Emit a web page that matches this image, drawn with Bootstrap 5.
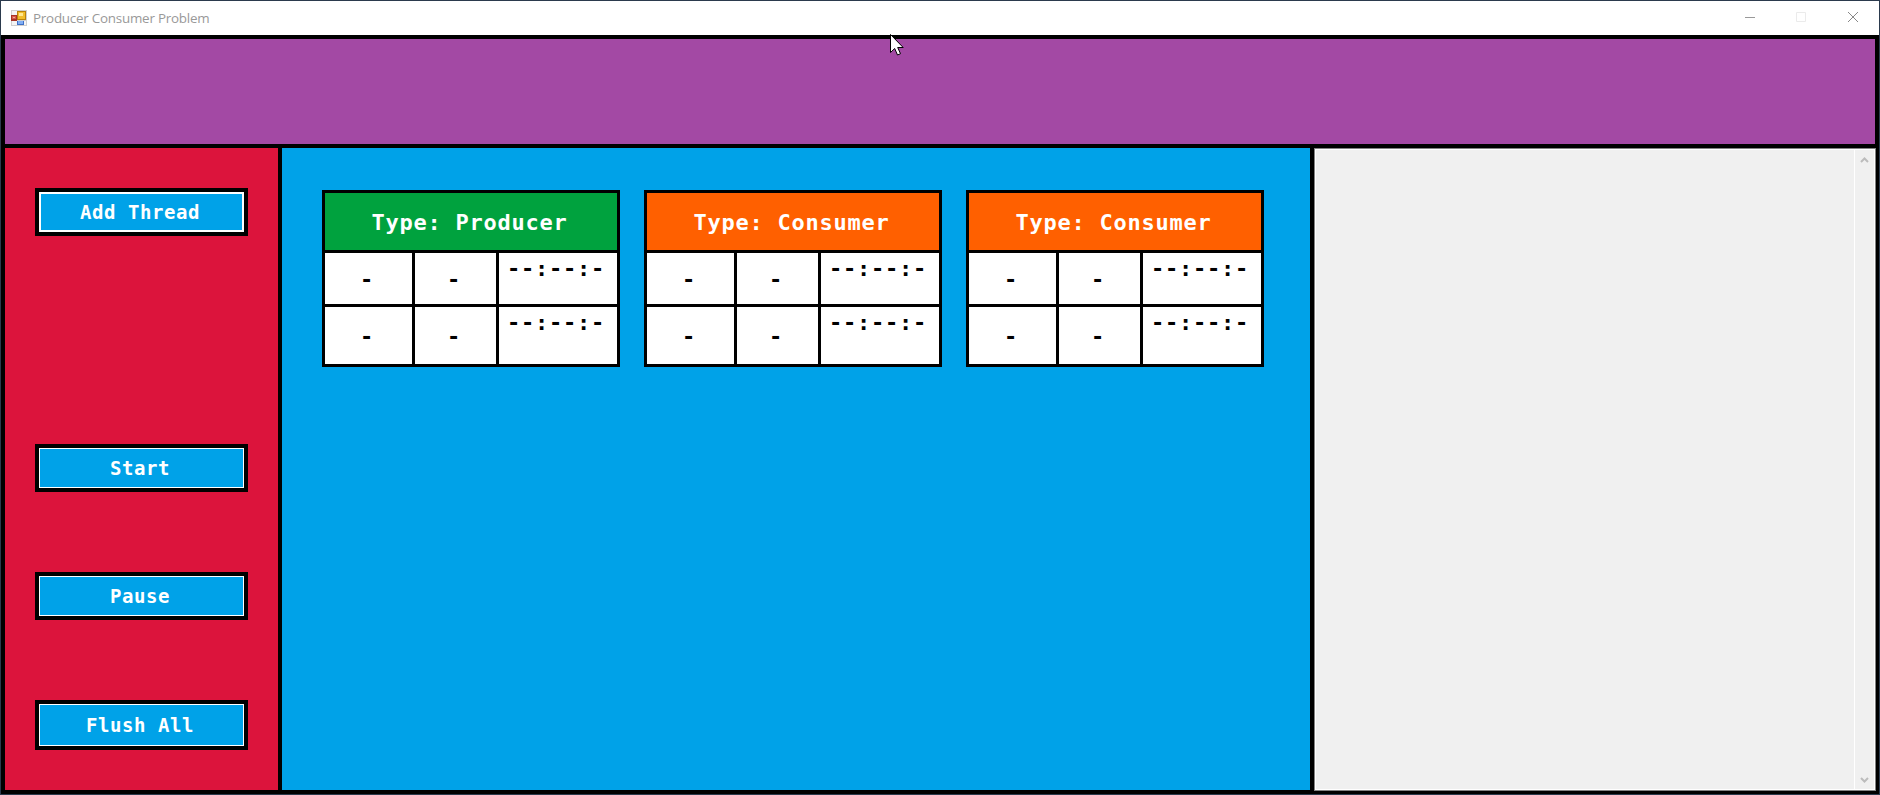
<!DOCTYPE html>
<html lang="en">
<head>
<meta charset="utf-8">
<title>Producer Consumer Problem</title>
<link href="https://cdn.jsdelivr.net/npm/bootstrap@5.3.0/dist/css/bootstrap.min.css" rel="stylesheet">
<style>
  body { height: 795px; background: #2b3a4d; padding: 1px; overflow: hidden; }
  .app-window { background: #000; height: 793px; }
  .title-bar { height: 34px; background: #fff; padding-left: 10px; }
  .title-text { font: 13.4px/28px "Open Sans", sans-serif; letter-spacing: -.23px; color: #999; margin: 0 0 0 6px; }
  .title-icons { padding-right: 9px; }
  .client { padding: 4px 3px 3px 4px; gap: 4px; height: 759px; }
  .banner { background: #a349a4; height: 105px; margin-right: 1px; }
  .side-panel { width: 273px; height: 642px; background: #dc143c; padding: 40px 30px 0; }
  .thread-panel { width: 1028px; height: 642px; background: #00a2e8; padding: 42px 40px; gap: 24px; }
  .log-panel { height: 643px; background: #f0f0f0; border: 1px solid #828282; box-shadow: inset 0 0 0 1px #fff; padding: 1px; }
  .scroll-track { width: 20px; border-left: 1px solid #fff; padding: 6px 0 4px; }
  .side-btn { width: 213px; height: 48px; padding: 0 3px 0 0; border: 4px solid #000; border-radius: 0; background: #00a2e8; box-shadow: inset 0 0 0 1px #fff;
    color: #fff; font: bold 19px/40px "DejaVu Sans Mono", monospace; letter-spacing: .58px; margin-bottom: 80px; }
  .side-btn:hover { background: #00a2e8; color: #fff; border-color: #000; }
  .side-btn.first { box-shadow: inset 0 0 0 2px #fff; margin-bottom: 208px; }
  .side-btn.last { height: 50px; margin-bottom: 0; }
  .thread-grid { display: grid; width: 298px; height: 177px; grid-template-columns: 87px 81px 118px; grid-template-rows: 57px 51px 57px; gap: 3px; padding: 3px; background: #000;
    font: bold 22px/26px "DejaVu Sans Mono", monospace; letter-spacing: .76px; color: #000; }
  .thread-grid > div { background: #fff; display: flex; align-items: center; justify-content: center; white-space: nowrap; padding: 2px 3px 0 0; }
  .thread-grid > .kind { grid-column: 1 / 4; color: #fff; background: #ff6000; }
  .thread-grid > .kind.producer { background: #00a23e; }
  .thread-grid > .clock { align-items: flex-start; padding-top: 3px; padding-right: 4px; }
  .pointer { left: 890px; top: 34px; }
</style>
<script src="https://cdn.jsdelivr.net/npm/bootstrap@5.3.0/dist/js/bootstrap.bundle.min.js"></script>
</head>
<body>
<div class="app-window">
  <header class="title-bar d-flex align-items-center">
    <svg width="16" height="16" viewBox="0 0 16 16" shape-rendering="crispEdges">
      <path fill="#cfcfcf" d="M0 0h16v16H0z"/>
      <path fill="#f4f4f4" d="M1 1h5v4H1zM1 11h5v4H1zM13 11h2v4h-2z"/>
      <path fill="#a83226" d="M0 5h6v6H0z"/><path fill="#d65a48" d="M1 6h4v3H1z"/><path fill="#f0a498" d="M2 7h2v1H2z"/>
      <path fill="#b98209" d="M6 1h9v9H6z"/><path fill="#f2bd2c" d="M7 2h7v7H7z"/><path fill="#ffe891" d="M8 3h4v3H8z"/>
      <path fill="#3f70c8" d="M6 11h7v4H6z"/><path fill="#80aef3" d="M7 11h5v3H7z"/>
    </svg>
    <span class="title-text">Producer Consumer Problem</span>
    <div class="title-icons ms-auto d-flex">
      <svg width="126" height="34" viewBox="1744 1 126 34" fill="none">
        <path stroke="#999" d="M1745 17.500h10"/>
        <path stroke="#ebebeb" d="M1796.500 12.500h9v9h-9z"/>
        <path stroke="#888" d="M1848 12l10 10M1858 12l-10 10"/>
      </svg>
    </div>
  </header>
  <main class="client d-flex flex-column">
    <div class="banner"></div>
    <div class="d-flex" style="gap:4px">
      <aside class="side-panel d-flex flex-column">
        <button class="btn side-btn first">Add Thread</button>
        <button class="btn side-btn">Start</button>
        <button class="btn side-btn">Pause</button>
        <button class="btn side-btn last">Flush All</button>
      </aside>
      <section class="thread-panel d-flex align-items-start">
        <div class="thread-grid">
          <div class="kind producer">Type: Producer</div>
          <div>-</div><div>-</div><div class="clock">--:--:-</div>
          <div>-</div><div>-</div><div class="clock">--:--:-</div>
        </div>
        <div class="thread-grid">
          <div class="kind">Type: Consumer</div>
          <div>-</div><div>-</div><div class="clock">--:--:-</div>
          <div>-</div><div>-</div><div class="clock">--:--:-</div>
        </div>
        <div class="thread-grid">
          <div class="kind">Type: Consumer</div>
          <div>-</div><div>-</div><div class="clock">--:--:-</div>
          <div>-</div><div>-</div><div class="clock">--:--:-</div>
        </div>
      </section>
      <section class="log-panel flex-grow-1 d-flex justify-content-end">
        <div class="scroll-track d-flex flex-column justify-content-between align-items-center">
          <svg width="9" height="8" viewBox="0 0 9 8" fill="none" stroke="#bcbcbc" stroke-width="2"><path d="M1 6l3.500-3.500L8 6"/></svg>
          <svg width="9" height="8" viewBox="0 0 9 8" fill="none" stroke="#bcbcbc" stroke-width="2"><path d="M1 1l3.500 3.500L8 1"/></svg>
        </div>
      </section>
    </div>
  </main>
</div>
<svg class="pointer position-absolute" width="14" height="22" viewBox="0 0 14 22"><path fill="#fff" stroke="#000" d="M.5.500v18l4.200-4 2.800 6.500 3-1.300-2.800-6.200h5.500z"/></svg>
</body>
</html>
